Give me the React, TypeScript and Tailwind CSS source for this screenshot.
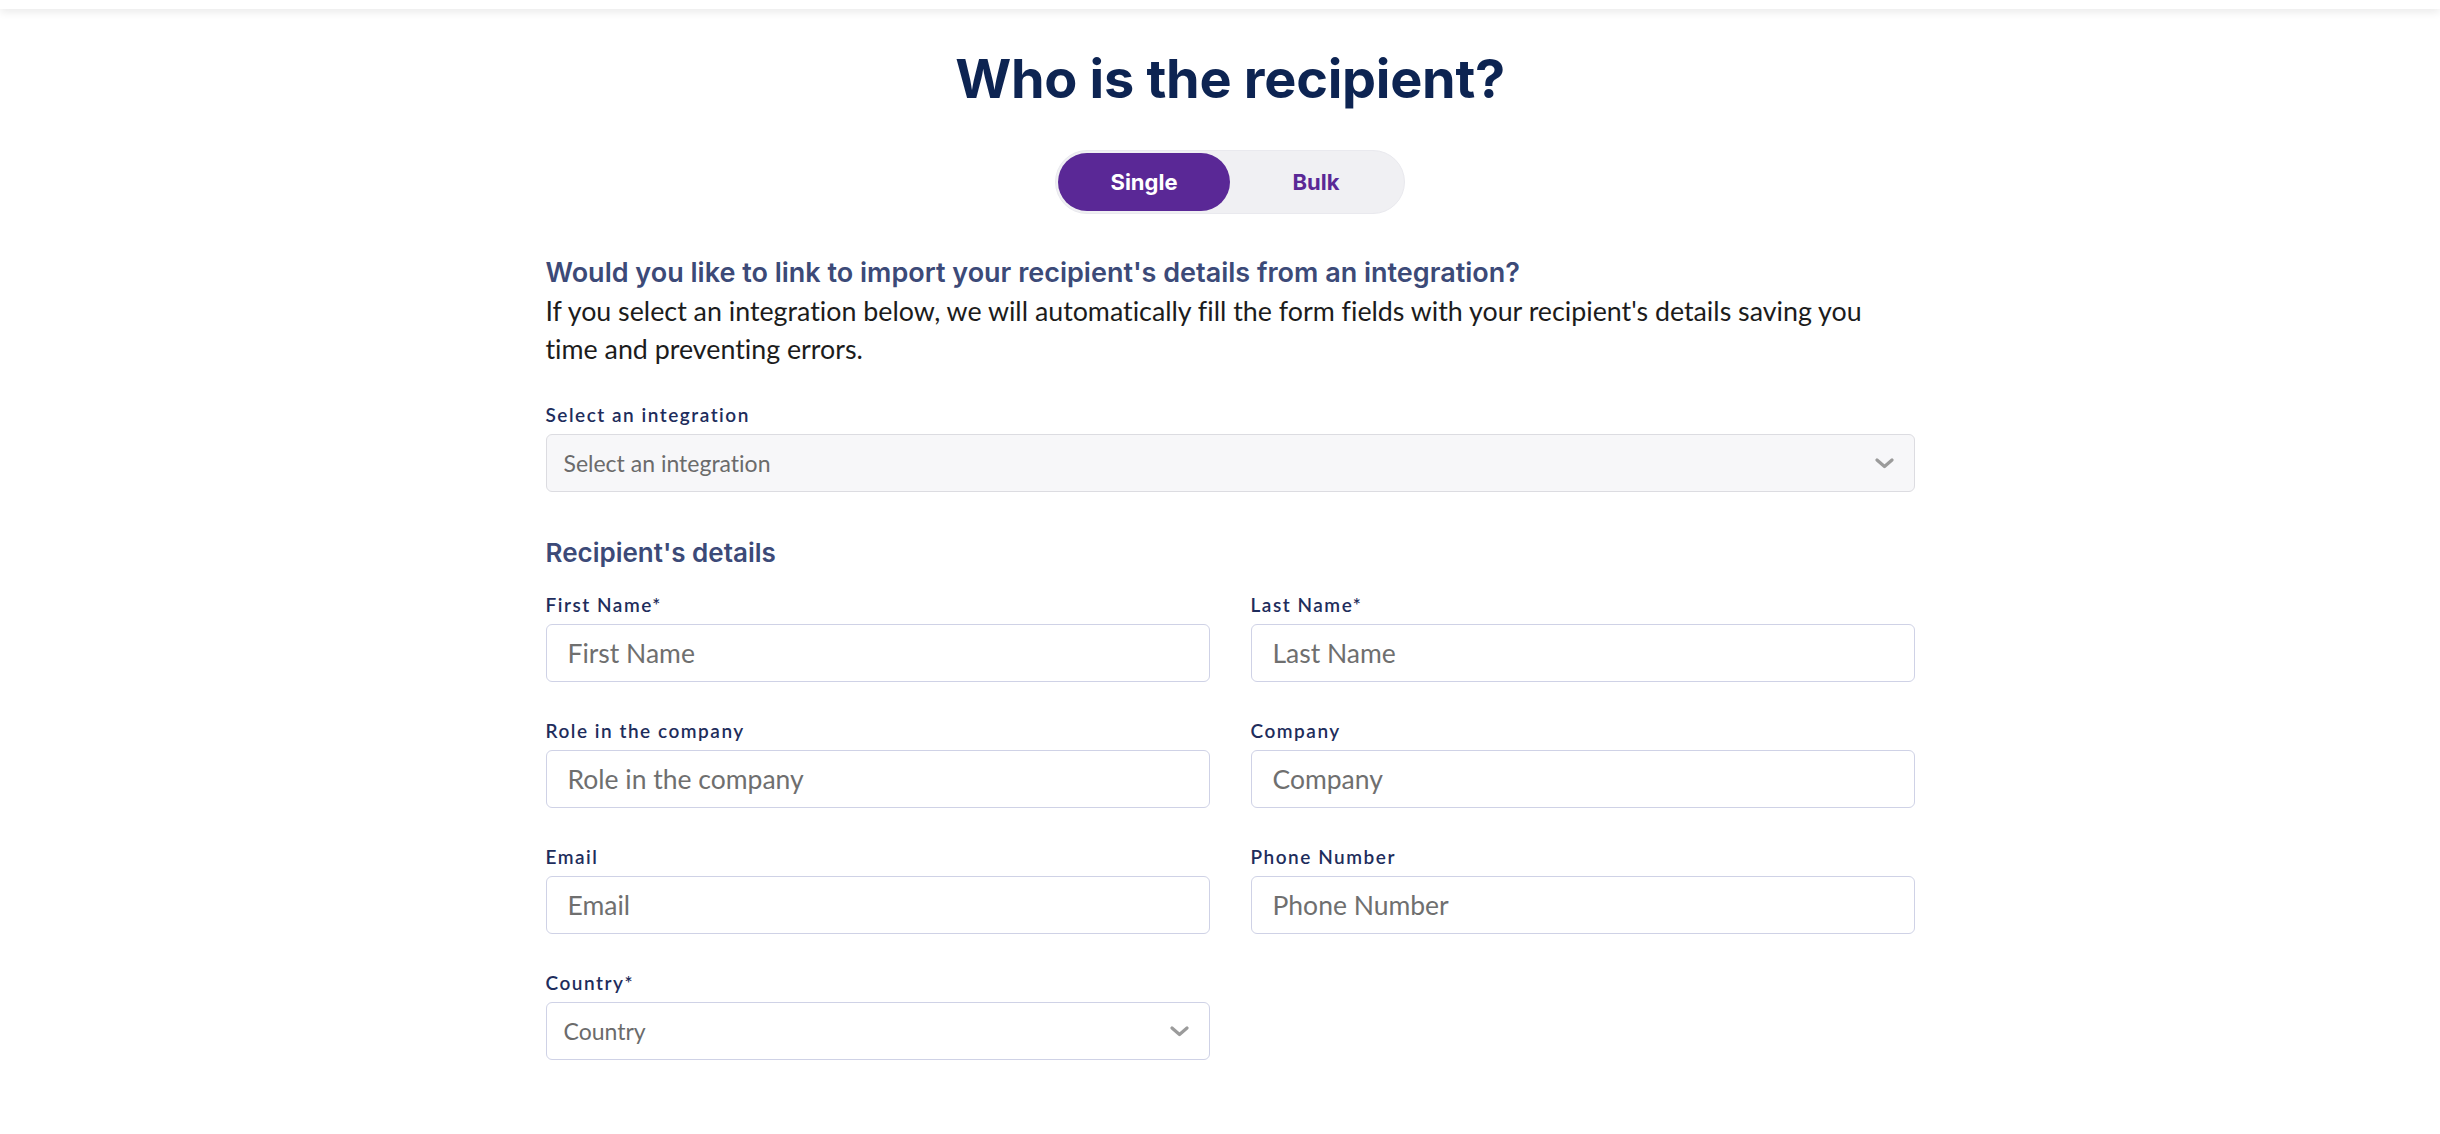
import { useState } from "react";

function Chevron() {
  return (
    <svg width="19" height="11" viewBox="0 0 19 11" fill="none" className="shrink-0">
      <polyline
        points="2,2 9.5,8.5 17,2"
        stroke="#9b9b9b"
        strokeWidth="3.2"
        strokeLinecap="round"
        strokeLinejoin="round"
      />
    </svg>
  );
}

function Label({ children }: { children: React.ReactNode }) {
  return (
    <label className="block h-[24px] text-[19px] leading-[24px] font-semibold tracking-[0.08em] text-[#1e2d5c]">
      {children}
    </label>
  );
}

function Field({ label, placeholder }: { label: string; placeholder: string }) {
  return (
    <div className="flex flex-col gap-[7px]">
      <Label>{label}</Label>
      <input
        type="text"
        placeholder={placeholder}
        className="h-[58px] w-full rounded-md border border-[#cfd2e6] bg-white px-[21px] text-[26.5px] text-[#222] placeholder:text-[#6f6f6f] outline-none"
      />
    </div>
  );
}

export default function App() {
  const [mode, setMode] = useState<"single" | "bulk">("single");

  return (
    <div className="min-h-screen bg-white font-['Lato',sans-serif] [font-variant-ligatures:none]">
      {/* Header strip */}
      <header className="h-[9px] bg-white shadow-[0_3px_8px_rgba(0,0,0,0.09)]" />

      <main className="pl-5">
        <div className="mx-auto w-[1369px]">
          <h1 className="mt-[37px] text-center font-['Inter',sans-serif] text-[54px] leading-[65px] font-bold tracking-[-0.005em] text-[#0d2452]">
            Who is the recipient?
          </h1>

          {/* Single / Bulk toggle */}
          <div className="mt-[39px] flex justify-center">
            <div className="flex h-[64px] w-[350px] rounded-full border border-[#e9e9ee] bg-[#f0f0f3] p-[2px]">
              <button
                onClick={() => setMode("single")}
                className={`h-full w-[172px] rounded-full font-['Inter',sans-serif] text-[22px] font-bold ${
                  mode === "single" ? "bg-[#5a2896] text-white" : "text-[#5a2896]"
                }`}
              >
                Single
              </button>
              <button
                onClick={() => setMode("bulk")}
                className={`h-full flex-1 rounded-full font-['Inter',sans-serif] text-[22px] font-bold ${
                  mode === "bulk" ? "bg-[#5a2896] text-white" : "text-[#5a2896]"
                }`}
              >
                Bulk
              </button>
            </div>
          </div>

          {/* Integration intro */}
          <h2 className="mt-[40px] font-['Inter',sans-serif] text-[27px] leading-[38px] font-semibold text-[#3c4a78]">
            Would you like to link to import your recipient's details from an integration?
          </h2>
          <p className="text-[26.8px] leading-[38px] text-[#1c1c1c]">
            If you select an integration below, we will automatically fill the form fields with your recipient's details saving you
            <br />
            time and preventing errors.
          </p>

          <div className="mt-[35px] flex flex-col gap-[7px]">
            <Label>Select an integration</Label>
            <button className="flex h-[58px] w-full items-center justify-between rounded-md border border-[#dcdce1] bg-[#f7f7f9] pl-[17px] pr-[20px] text-left">
              <span className="text-[23px] text-[#6b6b6b]">Select an integration</span>
              <Chevron />
            </button>
          </div>

          {/* Recipient's details */}
          <h3 className="mt-[45px] font-['Inter',sans-serif] text-[26px] leading-[32px] font-semibold text-[#3c4a78]">
            Recipient's details
          </h3>

          <div className="mt-[24px] grid grid-cols-2 gap-x-[41px] gap-y-[37px]">
            <Field label="First Name*" placeholder="First Name" />
            <Field label="Last Name*" placeholder="Last Name" />
            <Field label="Role in the company" placeholder="Role in the company" />
            <Field label="Company" placeholder="Company" />
            <Field label="Email" placeholder="Email" />
            <Field label="Phone Number" placeholder="Phone Number" />
            <div className="flex flex-col gap-[7px]">
              <Label>Country*</Label>
              <button className="flex h-[58px] w-full items-center justify-between rounded-md border border-[#cfd2e6] bg-white pl-[17px] pr-[20px] text-left">
                <span className="text-[23px] text-[#6b6b6b]">Country</span>
                <Chevron />
              </button>
            </div>
          </div>
        </div>
      </main>
    </div>
  );
}
